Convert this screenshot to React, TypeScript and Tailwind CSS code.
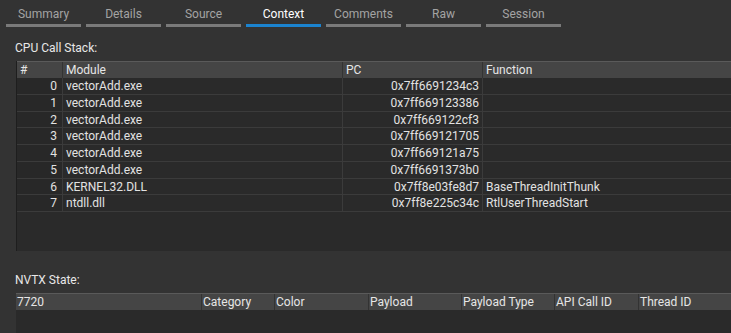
import React from "react";

const tabs = ["Summary", "Details", "Source", "Context", "Comments", "Raw", "Session"];

const rows = [
  ["0", "vectorAdd.exe", "0x7ff6691234c3", ""],
  ["1", "vectorAdd.exe", "0x7ff669123386", ""],
  ["2", "vectorAdd.exe", "0x7ff669122cf3", ""],
  ["3", "vectorAdd.exe", "0x7ff669121705", ""],
  ["4", "vectorAdd.exe", "0x7ff669121a75", ""],
  ["5", "vectorAdd.exe", "0x7ff6691373b0", ""],
  ["6", "KERNEL32.DLL", "0x7ff8e03fe8d7", "BaseThreadInitThunk"],
  ["7", "ntdll.dll", "0x7ff8e225c34c", "RtlUserThreadStart"],
];

const nvtxCols: [string, number][] = [
  ["7720", 186],
  ["Category", 73],
  ["Color", 94],
  ["Payload", 93],
  ["Payload Type", 93],
  ["API Call ID", 84],
  ["Thread ID", 120],
];

export default function App() {
  return (
    <div
      className="w-[731px] h-[333px] overflow-hidden bg-[#333333] text-[12px] text-[#e2e2e2]"
      style={{ fontFamily: "Roboto, 'Liberation Sans', sans-serif" }}
    >
      {/* Tabs */}
      <div className="flex gap-[5px] pl-[6px] pt-[6px]">
        {tabs.map((t) => {
          const active = t === "Context";
          return (
            <div key={t} className="w-[75px] flex flex-col items-center">
              <div
                className={
                  "h-[16px] leading-[16px] " + (active ? "text-white" : "text-[#a3a3a3]")
                }
              >
                {t}
              </div>
              <div
                className={
                  "mt-[2px] w-full h-[3px] " + (active ? "bg-[#1b83cf]" : "bg-[#7a7a7a]")
                }
              />
            </div>
          );
        })}
      </div>

      {/* CPU Call Stack */}
      <div className="pl-[15px] mt-[13px] h-[16px] leading-[16px] text-[#e8e8e8]">CPU Call Stack:</div>

      <div className="ml-[16px] mt-[5px] w-[730px] h-[190px] bg-[#2a2a2a] border-l border-[#1e1e1e] flex flex-col">
        <div className="flex shrink-0 h-[17px] leading-[16px] bg-[#454545] border-t border-[#5a5a5a] text-[#e6e6e6]">
          <div className="w-[46px] pl-[3px] border-r border-[#333]">#</div>
          <div className="w-[280px] pl-[3px] border-r border-[#333]">Module</div>
          <div className="w-[140px] pl-[3px] border-r border-[#333]">PC</div>
          <div className="flex-1 pl-[3px]">Function</div>
        </div>
        {rows.map((r, i) => (
          <div
            key={i}
            className="flex shrink-0 h-[16.75px] leading-[16px] border-b border-[#3b3b3b]"
          >
            <div className="w-[46px] pr-[5px] text-right border-r border-[#3b3b3b] bg-[#282828]">{r[0]}</div>
            <div className="w-[280px] pl-[3px] border-r border-[#3b3b3b]">{r[1]}</div>
            <div className="w-[140px] pr-[3px] text-right border-r border-[#3b3b3b]">{r[2]}</div>
            <div className="flex-1 pl-[3px]">{r[3]}</div>
          </div>
        ))}
      </div>

      {/* NVTX State */}
      <div className="pl-[15px] mt-[21px] h-[16px] leading-[16px] text-[#e8e8e8]">NVTX State:</div>

      <div className="ml-[16px] mt-[5px] w-[760px] h-[60px] bg-[#2a2a2a]">
        <div className="flex h-[17px] leading-[16px] bg-[#454545] border-t border-[#5a5a5a] text-[#e6e6e6]">
          {nvtxCols.map(([c, w], i) => (
            <div
              key={c}
              className={"shrink-0 pl-[1px] " + (i < nvtxCols.length - 1 ? "border-r border-[#333]" : "")}
              style={{ width: w }}
            >
              {c}
            </div>
          ))}
        </div>
      </div>
    </div>
  );
}
